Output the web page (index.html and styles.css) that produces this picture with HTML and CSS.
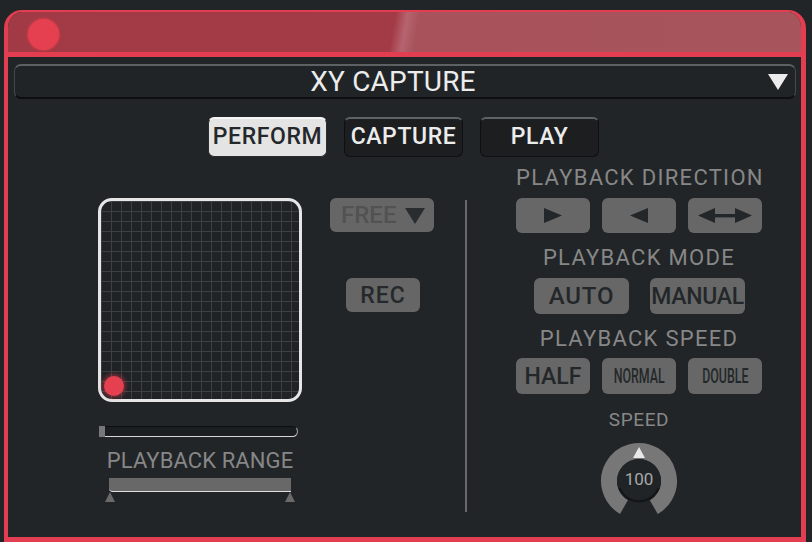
FILE: index.html
```html
<!DOCTYPE html>
<html>
<head>
<meta charset="utf-8">
<link rel="stylesheet" href="styles.css">
</head>
<body>
<div class="window">
  <div class="titlebar"><span class="dot"></span></div>
  <div class="content">
    <div class="dropdown">
      <span class="dd-label">XY CAPTURE</span>
      <svg class="dd-arrow" width="20" height="16" viewBox="0 0 20 16"><polygon points="0,0 20,0 10,16" fill="#ececec"/></svg>
    </div>
    <div class="tabs">
      <div class="tab active">PERFORM</div>
      <div class="tab">CAPTURE</div>
      <div class="tab">PLAY</div>
    </div>
    <div class="main">
      <div class="left">
        <div class="pad"><span class="puck"></span></div>
        <div class="progress"><span class="handle"></span></div>
        <div class="label range-label">PLAYBACK RANGE</div>
        <div class="range"><span class="tri tri-l"></span><span class="tri tri-r"></span></div>
      </div>
      <div class="mid">
        <div class="free"><span>FREE</span><svg width="20" height="16" viewBox="0 0 20 16"><polygon points="0,0 20,0 10,16" fill="#2a2d30"/></svg></div>
        <div class="rec">REC</div>
      </div>
      <div class="divider"></div>
      <div class="right">
        <div class="label">PLAYBACK DIRECTION</div>
        <div class="row3">
          <div class="btn"><svg width="18" height="15" viewBox="0 0 18 15"><polygon points="0,0 18,7.5 0,15" fill="#23272a"/></svg></div>
          <div class="btn"><svg width="18" height="15" viewBox="0 0 18 15"><polygon points="18,0 0,7.5 18,15" fill="#23272a"/></svg></div>
          <div class="btn"><svg width="54" height="15" viewBox="0 0 54 15"><polygon points="17,0 0,7.5 17,15" fill="#23272a"/><polygon points="37,0 54,7.5 37,15" fill="#23272a"/><rect x="15" y="6" width="24" height="3.4" fill="#23272a"/></svg></div>
        </div>
        <div class="label">PLAYBACK MODE</div>
        <div class="row2">
          <div class="btn wide">AUTO</div>
          <div class="btn wide tight">MANUAL</div>
        </div>
        <div class="label">PLAYBACK SPEED</div>
        <div class="row3 speed-row">
          <div class="btn half">HALF</div>
          <div class="btn"><span class="cond">NORMAL</span></div>
          <div class="btn"><span class="cond">DOUBLE</span></div>
        </div>
        <div class="label small">SPEED</div>
        <div class="knob">
          <svg width="80" height="80" viewBox="0 0 80 80">
            <circle cx="40" cy="40" r="30" fill="none" stroke="#777777" stroke-width="16" stroke-dasharray="157.08 31.42" transform="rotate(120 40 40)"/>
            <circle cx="40" cy="40" r="22" fill="#202427"/>
            <path d="M20.5 47 A21 21 0 0 0 59.5 47" fill="none" stroke="#121415" stroke-width="2"/>
            <polygon points="34,17 46,17 40,6" fill="#e8e8e8"/>
          </svg>
          <span class="knob-val">100</span>
        </div>
      </div>
    </div>
  </div>
</div>
</body>
</html>
```
FILE: styles.css
```css
* { box-sizing: border-box; }
html, body { margin: 0; padding: 0; }
body {
  width: 812px;
  height: 542px;
  overflow: hidden;
  background: #212528;
  font-family: Roboto, "DejaVu Sans", sans-serif;
}
.window {
  margin: 10px 0 0 4px;
  width: 802px;
  height: 532px;
  border: 4px solid #e23d50;
  border-top-width: 2px;
  border-right-width: 5px;
  border-bottom-width: 5px;
  border-radius: 18px 18px 0 0;
  display: flex;
  flex-direction: column;
  overflow: hidden;
  background: #212528;
}
.titlebar {
  height: 45px;
  flex: none;
  border-bottom: 5px solid #e23d50;
  background: linear-gradient(100deg, #a23a45 0%, #a33b46 48.5%, #b66470 50%, #a8535c 51.5%, #a8545c 100%);
  padding: 7px 0 0 20px;
}
.dot {
  display: block;
  width: 31px;
  height: 31px;
  border-radius: 50%;
  background: #e4404f;
  box-shadow: 0 0 2px 1px rgba(228, 64, 79, 0.6);
}
.content {
  flex: 1;
  padding: 7px 5px 0 6px;
  display: flex;
  flex-direction: column;
}
.dropdown {
  height: 35px;
  border-radius: 7px;
  border: 1px solid #0f1112;
  border-top: 2px solid #5d6164;
  border-left-color: #44484b;
  border-right-color: #44484b;
  border-bottom: 2px solid #0d0e0f;
  background: #202427;
  display: flex;
  align-items: center;
  justify-content: center;
  position: relative;
  padding-right: 24px;
}
.dd-label {
  color: #ececec;
  font-size: 28px;
  line-height: 30px;
  letter-spacing: 0.2px;
}
.dd-arrow {
  position: absolute;
  right: 7px;
  top: 8px;
}
.tabs {
  margin-top: 18px;
  padding-left: 194px;
  display: flex;
  gap: 17px;
}
.tab {
  width: 119px;
  height: 40px;
  border-radius: 6px;
  background: #1c1e20;
  border: 1px solid #0e0f10;
  border-top: 2px solid #5f6366;
  color: #ececec;
  font-size: 23px;
  font-weight: 500;
  letter-spacing: 0.6px;
  display: flex;
  align-items: center;
  justify-content: center;
  padding-bottom: 2px;
}
.tab.active {
  background: #e4e4e4;
  color: #24282b;
  border-color: #2a2c2e;
  border-top-color: #f4f4f4;
}
.main {
  margin-top: 10px;
  display: flex;
  align-items: flex-start;
}
.left {
  margin-left: 84px;
  margin-top: 31px;
  width: 204px;
  display: flex;
  flex-direction: column;
}
.pad {
  position: relative;
  width: 204px;
  height: 204px;
  border: 3px solid #e6e6e6;
  border-radius: 14px;
  background-color: #1f2326;
  background-image:
    linear-gradient(to right, #3c4043 1px, transparent 1px),
    linear-gradient(to bottom, #3c4043 1px, transparent 1px);
  background-size: 10px 10px;
}
.puck {
  position: absolute;
  left: 3px;
  bottom: 3px;
  width: 20px;
  height: 20px;
  border-radius: 50%;
  background: #e4404f;
  box-shadow: 0 0 4px 2px rgba(228, 64, 79, 0.45);
}
.progress {
  position: relative;
  margin: 24px 0 0 1px;
  width: 199px;
  height: 11px;
  background: #1b1e20;
  border-top: 1px solid #0c0d0e;
  border-bottom: 1px solid #d6d6d6;
  border-right: 1px solid #a8a8a8;
  border-radius: 0 6px 6px 0;
}
.handle {
  position: absolute;
  left: 0;
  top: -1px;
  bottom: -1px;
  width: 6px;
  background: #777777;
}
.label {
  color: #878787;
  font-size: 22px;
  letter-spacing: 1.3px;
  line-height: 22px;
  text-align: center;
  white-space: nowrap;
}
.range-label {
  margin-top: 13px;
  letter-spacing: 0.1px;
}
.range {
  position: relative;
  margin: 6px 0 0 11px;
  width: 182px;
  height: 14px;
  background: #686868;
  border-bottom: 1px solid #e0e0e0;
  border-radius: 0 0 0 4px;
}
.tri {
  position: absolute;
  top: 14px;
  width: 0;
  height: 0;
  border-left: 5px solid transparent;
  border-right: 5px solid transparent;
  border-bottom: 10px solid #6a6a6a;
}
.tri-l { left: -4px; }
.tri-r { right: -4px; }
.mid {
  margin-left: 28px;
  margin-top: 31px;
  width: 104px;
  display: flex;
  flex-direction: column;
}
.free {
  height: 34px;
  border-radius: 6px;
  background: #666666;
  display: flex;
  align-items: center;
  padding-left: 11px;
  gap: 9px;
  color: #525252;
  font-size: 24px;
  font-weight: 500;
}
.free svg { margin-top: 1px; }
.rec {
  margin: 46px 0 0 16px;
  width: 74px;
  height: 34px;
  border-radius: 6px;
  background: #666666;
  color: #25292c;
  font-size: 23px;
  font-weight: 500;
  letter-spacing: 1px;
  display: flex;
  align-items: center;
  justify-content: center;
}
.divider {
  margin-left: 31px;
  margin-top: 33px;
  width: 2px;
  height: 312px;
  background: #696969;
}
.right {
  margin-left: 49px;
  width: 246px;
  display: flex;
  flex-direction: column;
}
.row3 {
  margin: 9px 0 14px;
  display: flex;
  gap: 12px;
}
.row2 {
  margin: 9px 0 14px 18px;
  display: flex;
  gap: 21px;
}
.btn {
  width: 74px;
  height: 35px;
  border-radius: 6px;
  background: #676767;
  color: #23272a;
  font-size: 24px;
  font-weight: 500;
  letter-spacing: 0.8px;
  display: flex;
  align-items: center;
  justify-content: center;
  white-space: nowrap;
}
.btn.wide {
  width: 95px;
  height: 36px;
}
.btn.tight {
  letter-spacing: -0.3px;
  font-size: 23px;
}
.btn.half {
  letter-spacing: 0;
  font-size: 23px;
}
.speed-row { margin: 8px 0 16px; }
.speed-row .btn { height: 36px; }
.cond {
  display: inline-block;
  font-size: 20px;
  letter-spacing: 0;
  transform: scaleX(0.62);
  white-space: nowrap;
}
.label.small {
  font-size: 19px;
  line-height: 19px;
  letter-spacing: 0.6px;
}
.knob {
  position: relative;
  margin: 12px auto 0;
  width: 80px;
  height: 80px;
}
.knob svg { display: block; }
.knob-val {
  position: absolute;
  left: 0;
  right: 0;
  top: 28px;
  text-align: center;
  color: #a8a8a8;
  font-size: 17px;
  line-height: 20px;
}
```
